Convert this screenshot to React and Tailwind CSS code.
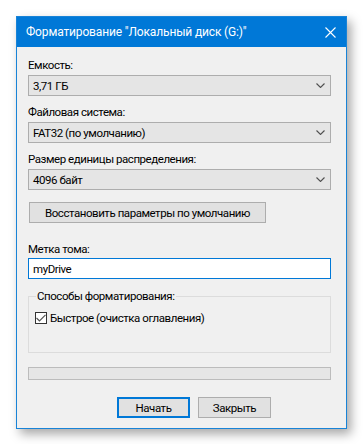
import { useState } from "react";

const font = { fontFamily: 'Roboto, "Noto Sans", sans-serif' };

function Chevron() {
  return (
    <svg width="9" height="5" viewBox="0 0 9 5" className="mr-[4px]">
      <path d="M0.5 0.5 L4.5 4.5 L8.5 0.5" fill="none" stroke="#505050" strokeWidth="1.1" />
    </svg>
  );
}

function Select({ value }) {
  return (
    <div className="flex items-center justify-between h-[21px] w-[303px] bg-[#e5e5e5] border border-[#adadad] pl-[4px] pr-[1px]">
      <span>{value}</span>
      <Chevron />
    </div>
  );
}

function App() {
  const [label, setLabel] = useState("myDrive");

  return (
    <div className="min-h-screen bg-white p-4 text-[11.5px] leading-[16px] tracking-[-0.45px] text-black" style={font}>
      <div className="w-[331px] border border-[#1883d7] bg-[#f0f0f0] shadow-[4px_5px_10px_rgba(0,0,0,0.35)]">
        {/* title bar */}
        <div className="flex items-center justify-between h-[30px] bg-[#0078d7] text-white pl-[9px] pr-[10px]">
          <span className="text-[12px] tracking-[-0.15px]">Форматирование "Локальный диск (G:)"</span>
          <svg width="11" height="11" viewBox="0 0 11 11">
            <path d="M0.5 0.5 L10.5 10.5 M10.5 0.5 L0.5 10.5" stroke="white" strokeWidth="1.1" />
          </svg>
        </div>

        <div className="pl-[11px] pt-[10px] pb-[10px]">
          <div className="mb-[2px]">Емкость:</div>
          <Select value="3,71 ГБ" />

          <div className="mt-[8px] mb-[2px]">Файловая система:</div>
          <Select value="FAT32 (по умолчанию)" />

          <div className="mt-[8px] mb-[2px]">Размер единицы распределения:</div>
          <Select value="4096 байт" />

          <button className="mt-[12px] ml-[1px] h-[21px] w-[237px] bg-[#e1e1e1] border border-[#adadad] flex items-center justify-center whitespace-nowrap">
            Восстановить параметры по умолчанию
          </button>

          <div className="mt-[18px] mb-[1px]">Метка тома:</div>
          <div className="flex items-center h-[21px] w-[303px] bg-white border border-[#0078d7] pl-[4px]">
            <input
              value={label}
              onChange={(e) => setLabel(e.target.value)}
              className="outline-none bg-transparent w-full"
            />
          </div>

          <fieldset className="mt-[9px] w-[303px] h-[65px] border border-[#dcdcdc] pl-[7px] pb-[25px]">
            <legend className="px-[1px]">Способы форматирования:</legend>
            <label className="flex items-center mt-[6px] -ml-[1px]">
              <span className="w-[12px] h-[12px] border border-[#333333] bg-white flex items-center justify-center mr-[3px]">
                <svg width="10" height="8" viewBox="0 0 10 8">
                  <path d="M0.5 4 L3.5 7 L9.5 0.8" fill="none" stroke="#555555" strokeWidth="1.2" />
                </svg>
              </span>
              Быстрое (очистка оглавления)
            </label>
          </fieldset>

          <div className="mt-[14px] h-[13px] w-[303px] bg-[#e6e6e6] border border-[#bcbcbc]" />

          <div className="flex gap-[8px] mt-[17px] ml-[89px]">
            <button className="h-[21px] w-[73px] bg-[#e1e1e1] border-2 border-[#0078d7]">Начать</button>
            <button className="h-[21px] w-[73px] bg-[#e1e1e1] border border-[#adadad]">Закрыть</button>
          </div>
        </div>
      </div>
    </div>
  );
}

export default App;
